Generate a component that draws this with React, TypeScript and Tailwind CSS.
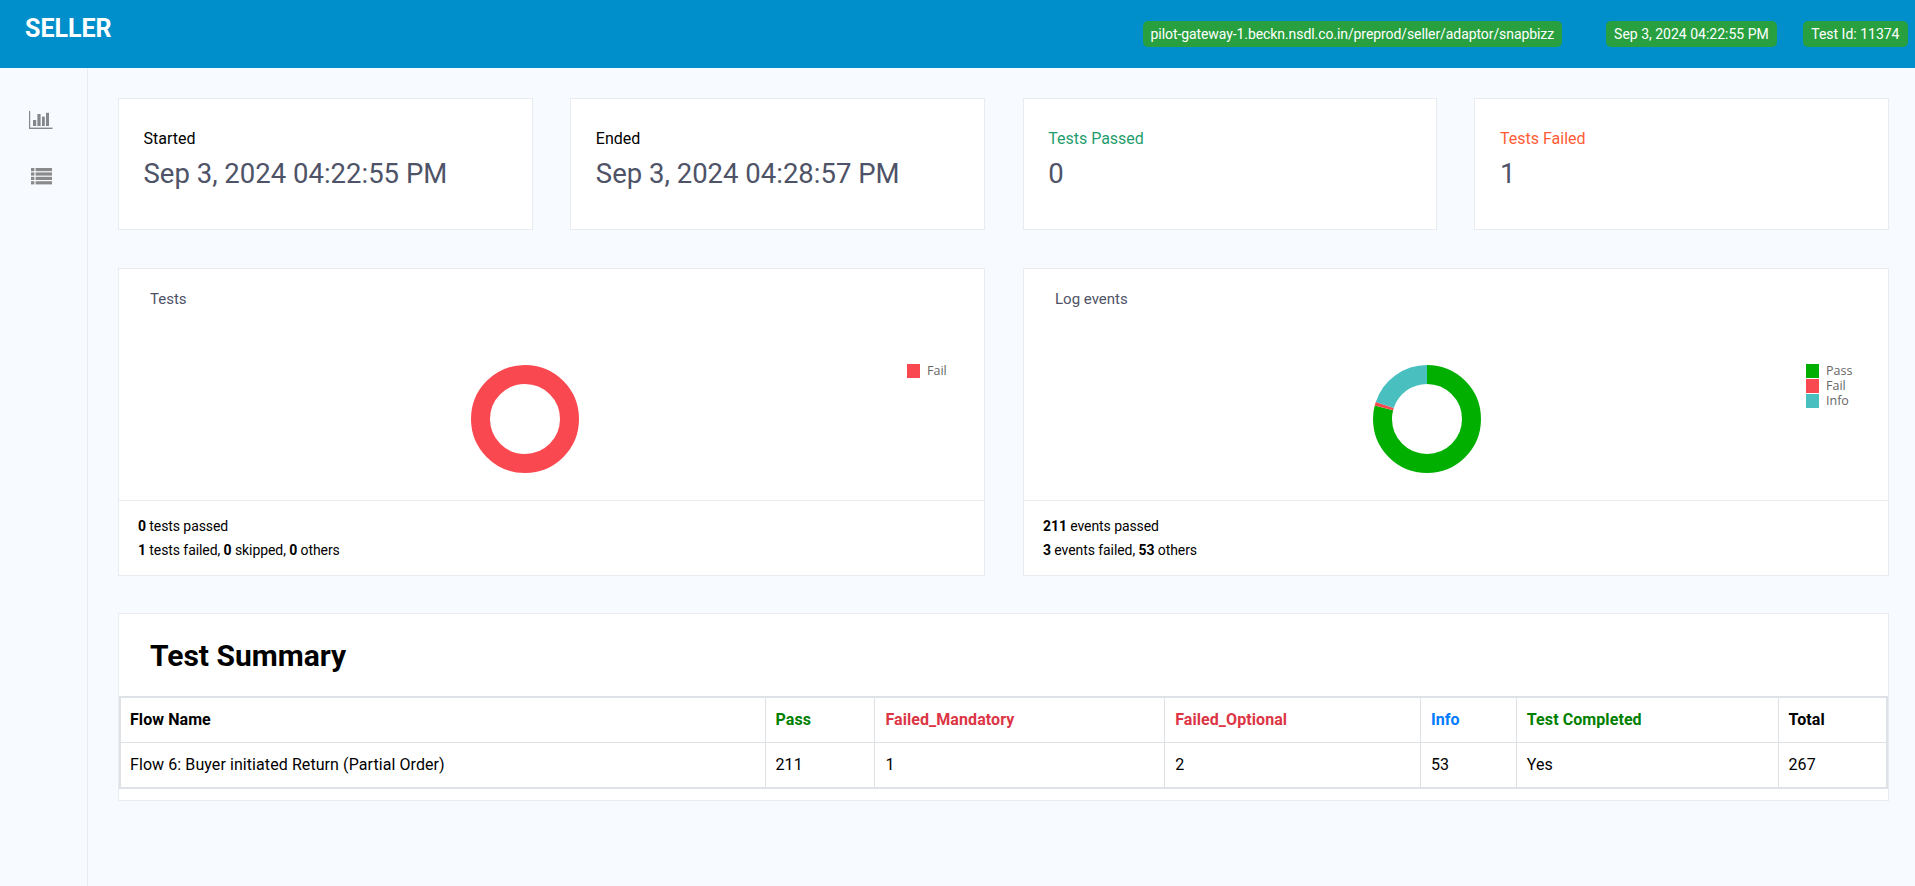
const roboto = "font-['Roboto',sans-serif]";

const stats = [
  { label: "Started", value: "Sep 3, 2024 04:22:55 PM", color: "text-black" },
  { label: "Ended", value: "Sep 3, 2024 04:28:57 PM", color: "text-black" },
  { label: "Tests Passed", value: "0", color: "text-[#1f9d6d]" },
  { label: "Tests Failed", value: "1", color: "text-[#ff5c35]" },
];

const columns = [
  { name: "Flow Name", width: "w-[646px]", color: "text-black" },
  { name: "Pass", width: "w-[110px]", color: "text-[#008000]" },
  { name: "Failed_Mandatory", width: "w-[290px]", color: "text-[#dc3545]" },
  { name: "Failed_Optional", width: "w-[256px]", color: "text-[#dc3545]" },
  { name: "Info", width: "w-[96px]", color: "text-[#007bff]" },
  { name: "Test Completed", width: "w-[262px]", color: "text-[#008000]" },
  { name: "Total", width: "w-[109px]", color: "text-black" },
];

const row = ["Flow 6: Buyer initiated Return (Partial Order)", "211", "1", "2", "53", "Yes", "267"];

const PASS = "#00af00";
const FAIL = "#f9484f";
const INFO = "#4abfc0";

type Slice = { value: number; color: string };

function Donut({ slices }: { slices: Slice[] }) {
  const total = slices.reduce((sum, s) => sum + s.value, 0);
  let start = 0;
  return (
    <svg width="108" height="108" viewBox="0 0 108 108" className="shrink-0">
      {slices.map((s) => {
        const offset = -start;
        start += s.value;
        return (
          <circle
            key={s.color}
            cx="54"
            cy="54"
            r="44.5"
            fill="none"
            stroke={s.color}
            strokeWidth="19"
            pathLength={total}
            strokeDasharray={`${s.value} ${total - s.value}`}
            strokeDashoffset={offset}
            transform="rotate(-90 54 54)"
          />
        );
      })}
    </svg>
  );
}

function Legend({ items }: { items: { label: string; color: string }[] }) {
  return (
    <div className="-mt-px flex flex-col gap-px font-['Open_Sans',sans-serif] text-[12.5px] leading-[14px] text-[#666666]">
      {items.map((item) => (
        <div key={item.label} className="flex items-center gap-[7px]">
          <span className="h-[14px] w-[13px]" style={{ backgroundColor: item.color }} />
          <span>{item.label}</span>
        </div>
      ))}
    </div>
  );
}

function BarsIcon() {
  return (
    <svg width="24" height="18" viewBox="0 0 24 18" fill="#85878c">
      <rect x="0" y="0" width="1.2" height="18" />
      <rect x="0" y="16.6" width="23.5" height="1.4" />
      <rect x="4" y="9" width="3.2" height="6" />
      <rect x="8.4" y="3" width="3.2" height="12" />
      <rect x="13" y="5.6" width="2.8" height="9.4" />
      <rect x="17" y="1.8" width="3" height="13.2" />
    </svg>
  );
}

function ListIcon() {
  const ys = [0, 4.4, 8.8, 13.2];
  return (
    <svg width="21" height="17" viewBox="0 0 21 17" fill="#8a8a8a">
      {ys.map((y) => (
        <g key={y}>
          <rect x="0" y={y} width="3.4" height="3.2" />
          <rect x="4.6" y={y} width="16.4" height="3.2" />
        </g>
      ))}
    </svg>
  );
}

export default function App() {
  return (
    <div className={`${roboto} flex min-h-[886px] flex-col bg-[#f7fafe] text-black`}>
      <header className="flex h-[68px] items-start justify-between bg-[#018fcc] text-white">
        <div className="pl-[25px] pt-[14px] text-[25px] leading-[30px] font-bold">SELLER</div>
        <div className="flex pr-[7px] pt-[21px] text-sm leading-[26px]">
          <span className="rounded-[5px] bg-[#28a040] px-[8px] tracking-[-0.08px]">
            pilot-gateway-1.beckn.nsdl.co.in/preprod/seller/adaptor/snapbizz
          </span>
          <span className="ml-[44px] rounded-[5px] bg-[#28a040] px-[8px]">Sep 3, 2024 04:22:55 PM</span>
          <span className="ml-[26px] rounded-[5px] bg-[#28a040] px-[8.5px]">Test Id: 11374</span>
        </div>
      </header>

      <div className="flex flex-1">
        <aside className="flex w-[88px] shrink-0 flex-col gap-[39px] border-r border-[#e8ebef] pl-[29px] pt-[43px]">
          <BarsIcon />
          <div className="pl-[1.5px]">
            <ListIcon />
          </div>
        </aside>

        <main className="w-[1801px] pl-[30px] pt-[30px]">
          <div className="grid grid-cols-[415px_415px_414.5px_414.5px] gap-x-[37.33px]">
            {stats.map((s) => (
              <div key={s.label} className="h-[132px] border border-[#e8ebef] bg-white pl-[24.5px] pt-[28px]">
                <div className={`text-base leading-[24px] ${s.color}`}>{s.label}</div>
                <div className="mt-[2px] text-[27.5px] leading-[42px] text-[#4e5367]">{s.value}</div>
              </div>
            ))}
          </div>

          <div className="mt-[38px] grid grid-cols-[867px_866px] gap-x-[38px]">
            <div className="h-[308px] border border-[#e8ebef] bg-white">
              <div className="h-[232px] border-b border-[#e8ebef]">
                <div className="pl-[31px] pt-[20px] text-[15px] leading-[20px] text-[#4e5367]">Tests</div>
                <div className="mt-[56px] flex items-start">
                  <div className="ml-[352px]">
                    <Donut slices={[{ value: 1, color: FAIL }]} />
                  </div>
                  <div className="ml-[328px]">
                    <Legend items={[{ label: "Fail", color: FAIL }]} />
                  </div>
                </div>
              </div>
              <div className="pl-[19px] pt-[13px] text-sm leading-[24px] tracking-[-0.08px]">
                <div>
                  <b>0</b> tests passed
                </div>
                <div>
                  <b>1</b> tests failed, <b>0</b> skipped, <b>0</b> others
                </div>
              </div>
            </div>

            <div className="h-[308px] border border-[#e8ebef] bg-white">
              <div className="h-[232px] border-b border-[#e8ebef]">
                <div className="pl-[31px] pt-[20px] text-[15px] leading-[20px] text-[#4e5367]">Log events</div>
                <div className="mt-[56px] flex items-start">
                  <div className="ml-[349px]">
                    <Donut
                      slices={[
                        { value: 211, color: PASS },
                        { value: 3, color: FAIL },
                        { value: 53, color: INFO },
                      ]}
                    />
                  </div>
                  <div className="ml-[325px]">
                    <Legend
                      items={[
                        { label: "Pass", color: PASS },
                        { label: "Fail", color: FAIL },
                        { label: "Info", color: INFO },
                      ]}
                    />
                  </div>
                </div>
              </div>
              <div className="pl-[19px] pt-[13px] text-sm leading-[24px] tracking-[-0.08px]">
                <div>
                  <b>211</b> events passed
                </div>
                <div>
                  <b>3</b> events failed, <b>53</b> others
                </div>
              </div>
            </div>
          </div>

          <div className="mt-[37px] h-[188px] border border-[#e8ebef] bg-white">
            <h2 className="pl-[31px] pt-[24px] text-[30px] leading-[36px] font-bold">Test Summary</h2>
            <table className="mt-[22px] table-fixed border-collapse border-2 border-[#dee2e6] text-base tracking-[0.08px]">
              <thead>
                <tr className="h-[45px]">
                  {columns.map((c) => (
                    <th
                      key={c.name}
                      className={`border border-[#dee2e6] px-[10px] text-left font-bold first:pl-[9px] ${c.width} ${c.color}`}
                    >
                      {c.name}
                    </th>
                  ))}
                </tr>
              </thead>
              <tbody>
                <tr className="h-[46px]">
                  {row.map((cell, i) => (
                    <td key={i} className="border border-[#dee2e6] px-[10px] first:pl-[9px]">
                      {cell}
                    </td>
                  ))}
                </tr>
              </tbody>
            </table>
          </div>
        </main>
      </div>
    </div>
  );
}
